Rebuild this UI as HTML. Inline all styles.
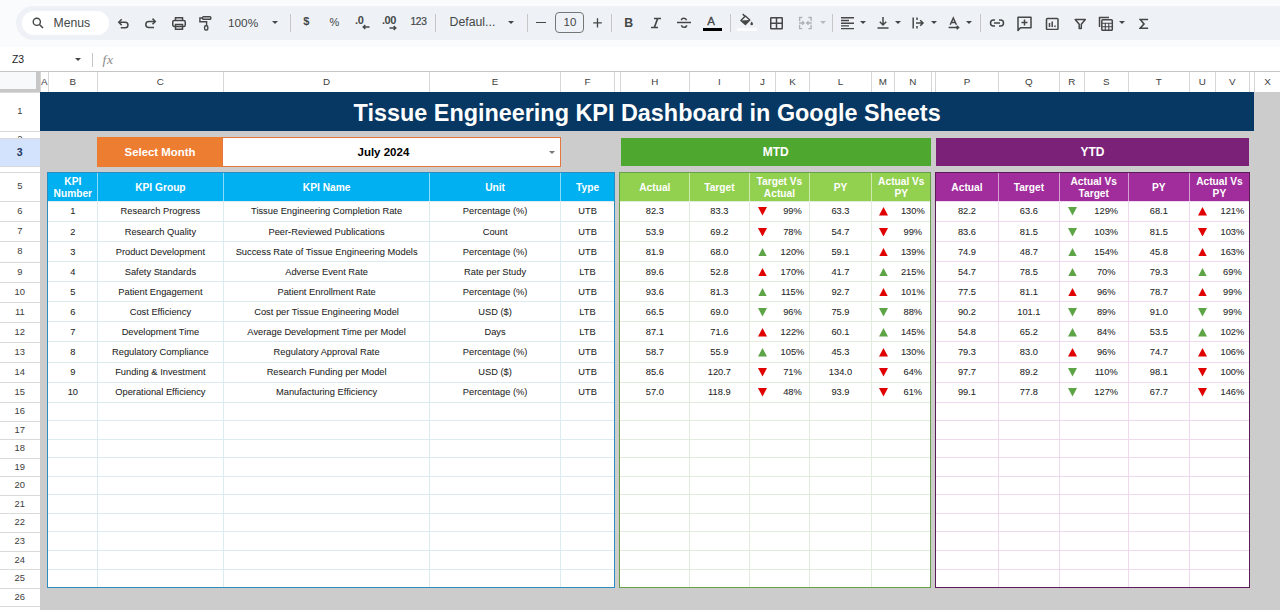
<!DOCTYPE html>
<html><head><meta charset="utf-8">
<style>
html,body{margin:0;padding:0;}
body{width:1280px;height:610px;overflow:hidden;position:relative;background:#f9fbfd;font-family:"Liberation Sans",sans-serif;}
.c,.title{position:absolute;}
#sheet>div{position:absolute;}
.tb{position:absolute;left:16px;top:5.5px;width:1300px;height:34.5px;border-radius:17px;background:#eef2f7;}
.pill{position:absolute;left:22px;top:10.5px;width:87px;height:24.5px;border-radius:12.25px;background:#fff;}
.t{position:absolute;color:#444746;white-space:nowrap;}
.ico{position:absolute;}
.sep{position:absolute;width:1px;background:#c7c7c7;top:13.5px;height:18.5px;}
.arr{position:absolute;width:0;height:0;border-left:3.5px solid transparent;border-right:3.5px solid transparent;border-top:3.5px solid #444746;}
.fbar{position:absolute;left:0;top:47px;width:1280px;height:24px;background:#fff;}
.ch{position:absolute;top:71.5px;height:20.5px;box-sizing:border-box;background:#fff;color:#3c3c3c;font-size:9.8px;padding-top:0px;display:flex;align-items:center;justify-content:center;}
.rh{position:absolute;left:0;width:39.5px;box-sizing:border-box;border-top:1px solid #dadada;background:#fff;color:#3c3c3c;font-size:9.4px;text-align:center;overflow:hidden;}
.rh.sel{background:#d3e3fd;color:#1f3763;font-weight:bold;font-size:10.6px;}
.corner{position:absolute;left:0;top:71px;width:40px;height:21px;background:#f8f9fa;border-top:1px solid #c4c7c5;box-sizing:border-box;}
.td{display:inline-block;width:0;height:0;border-left:4.2px solid transparent;border-right:4.2px solid transparent;border-top:8.4px solid #e60000;}
.tu{display:inline-block;width:0;height:0;border-left:4.2px solid transparent;border-right:4.2px solid transparent;border-bottom:8.4px solid #e60000;}
.dd{position:absolute;right:5px;top:12.5px;width:0;height:0;border-left:3.5px solid transparent;border-right:3.5px solid transparent;border-top:3.5px solid #777;}
</style></head><body>
<div class="tb"></div>
<div class="pill"></div>
<svg class="ico" style="left:32px;top:17px" width="12" height="12" viewBox="0 0 12 12"><circle cx="4.8" cy="4.8" r="3.6" fill="none" stroke="#444746" stroke-width="1.4"/><line x1="7.5" y1="7.5" x2="11" y2="11" stroke="#444746" stroke-width="1.5"/></svg>
<div class="t" style="left:53.5px;top:15.8px;font-size:12.2px">Menus</div>
<div class="fbar"></div>
<div class="t" style="left:12.3px;top:52.2px;font-size:11.6px;color:#1f1f1f;transform:scaleX(0.9);transform-origin:0 0">Z3</div>
<div class="arr" style="left:75px;top:57.5px"></div>
<div class="sep" style="left:92px;top:53px;height:14px"></div>
<div class="t" style="left:102.5px;top:51.6px;font-size:13.5px;font-style:italic;color:#8a8a8a;font-family:'Liberation Serif',serif;letter-spacing:0.8px">fx</div>
<svg class="ico" style="left:117px;top:18px" width="13.00" height="12.00" viewBox="0 0 13.00 12.00" fill="none" stroke="#444746" stroke-width="1.5"><path d="M2.4 4.2 H8.2 A2.75 2.75 0 0 1 8.2 9.7 H3.8"/><path d="M4.7 1.3 L1.8 4.2 L4.7 7.1"/></svg>
<svg class="ico" style="left:144px;top:18px" width="13.00" height="12.00" viewBox="0 0 13.00 12.00" fill="none" stroke="#444746" stroke-width="1.5"><path d="M11 3.4 H4.85 A3.05 3.05 0 0 0 4.85 9.5 H10"/><path d="M8.5 0.6 L11.3 3.4 L8.5 6.2"/></svg>
<svg class="ico" style="left:171px;top:16px" width="16.00" height="14.00" viewBox="0 0 16.00 14.00" fill="none" stroke="#444746" stroke-width="1.5"><path d="M4.5 4.5 V1.75 H11.5 V4.5"/><rect x="1.75" y="4.5" width="12.5" height="6" rx="1.5"/><rect x="4.5" y="8.5" width="7" height="4.75"/></svg>
<svg class="ico" style="left:198px;top:15px" width="15.00" height="17.00" viewBox="0 0 15.00 17.00" fill="none" stroke="#444746" stroke-width="1.5"><rect x="4.6" y="1.8" width="8.2" height="2.4" rx="0.8" stroke-width="1.4"/><path d="M4.6 3 H1.9 V6.8 H8.6 V10.6" stroke-width="1.4"/><rect x="6.6" y="10.8" width="3.2" height="4.2" rx="1.2" stroke-width="1.4"/></svg>
<div class="t" style="left:228px;top:16px;font-size:11.8px;">100%</div>
<div class="arr" style="left:271.5px;top:20.5px;border-top-color:#444746"></div>
<div class="sep" style="left:290.1px;top:13.75px;height:18.15px"></div>
<div class="t" style="left:303.3px;top:15.3px;font-size:11px;font-weight:bold">$</div>
<div class="t" style="left:329.5px;top:16px;font-size:11px;">%</div>
<div class="t" style="left:355px;top:13.5px;font-size:11px;font-weight:bold;letter-spacing:-0.3px">.0</div>
<svg class="ico" style="left:362px;top:24px" width="8.00" height="6.00" viewBox="0 0 8.00 6.00" fill="none" stroke="#444746" stroke-width="1.5"><path d="M7.5 3 H1.2 M3.3 1 L1.2 3 L3.3 5" stroke-width="1.4"/></svg>
<div class="t" style="left:382px;top:13.5px;font-size:11px;font-weight:bold;letter-spacing:-0.5px">.00</div>
<svg class="ico" style="left:389px;top:24.5px" width="8.00" height="6.00" viewBox="0 0 8.00 6.00" fill="none" stroke="#444746" stroke-width="1.5"><path d="M0.5 3 H6.8 M4.7 1 L6.8 3 L4.7 5" stroke-width="1.4"/></svg>
<div class="t" style="left:410.6px;top:16.2px;font-size:10.2px;letter-spacing:-0.4px;-webkit-text-stroke:0.2px #444746">123</div>
<div class="sep" style="left:435.1px;top:13.75px;height:18.15px"></div>
<div class="t" style="left:449.5px;top:15px;font-size:12.3px;">Defaul...</div>
<div class="arr" style="left:507.5px;top:20.8px;border-top-color:#444746"></div>
<div class="sep" style="left:527.0px;top:13.75px;height:18.15px"></div>
<div style="position:absolute;left:536px;top:21.8px;width:9.6px;height:1.5px;background:#444746"></div>
<div style="position:absolute;left:555px;top:12.25px;width:29.4px;height:20.25px;box-sizing:border-box;border:1px solid #747775;border-radius:4px"></div>
<div class="t" style="left:563.5px;top:16.2px;font-size:11.5px;">10</div>
<svg class="ico" style="left:591.5px;top:16.5px" width="11.00" height="11.50" viewBox="0 0 11.00 11.50" fill="none" stroke="#444746" stroke-width="1.5"><path d="M5.5 1.2 V10.4 M1.2 5.8 H9.8" stroke-width="1.35"/></svg>
<div class="sep" style="left:610.75px;top:13.75px;height:18.15px"></div>
<div class="t" style="left:624.2px;top:15.6px;font-size:12.3px;font-weight:bold">B</div>
<svg class="ico" style="left:650px;top:16.5px" width="12.00" height="12.00" viewBox="0 0 12.00 12.00" fill="none" stroke="#444746" stroke-width="1.5"><path d="M4 1.5 H11 M1 10.5 H8 M7.7 1.5 L4.3 10.5" stroke-width="1.7"/></svg>
<svg class="ico" style="left:676px;top:16px" width="16.00" height="13.00" viewBox="0 0 16.00 13.00" fill="none" stroke="#444746" stroke-width="1.5"><path d="M1 6.5 H15"/><path d="M10.6 4.3 C10.2 2.8 9 2.2 8 2.2 C6.6 2.2 5.4 2.9 5.4 4.2"/><path d="M5.4 9.2 C5.8 10.7 7 11.3 8 11.3 C9.4 11.3 10.6 10.6 10.6 9.2"/></svg>
<div class="t" style="left:707.2px;top:15.2px;font-size:11.5px;-webkit-text-stroke:0.3px #444746">A</div>
<div style="position:absolute;left:702.75px;top:27.9px;width:19.2px;height:3px;background:#000"></div>
<div class="sep" style="left:730.1px;top:13.75px;height:18.15px"></div>
<svg class="ico" style="left:738px;top:12px" width="18.00" height="15.00" viewBox="0 0 18.00 15.00" fill="none" stroke="#444746" stroke-width="1.5"><path d="M4.8 1.9 L6.8 4.3"/><path d="M2.9 8.4 L7.4 3.9 L11.8 8.1 L7.4 12.6 Z" stroke-width="1.4" stroke-linejoin="round"/><path d="M2.9 8.4 L11.8 8.1 L7.4 12.6 Z" fill="#444746" stroke="none"/><path d="M13.7 9.4 C12.9 10.6 12.4 11.2 12.4 11.9 A1.3 1.3 0 0 0 15 11.9 C15 11.2 14.5 10.6 13.7 9.4 Z" fill="#444746" stroke="none"/></svg>
<div style="position:absolute;left:737px;top:28px;width:20px;height:2.5px;background:#fbfcfd"></div>
<svg class="ico" style="left:769px;top:16px" width="15.00" height="14.00" viewBox="0 0 15.00 14.00" fill="none" stroke="#444746" stroke-width="1.5"><rect x="1.75" y="1.75" width="11.5" height="11" rx="0.5"/><path d="M7.5 1.75 V12.75 M1.75 7.25 H13.25"/></svg>
<svg class="ico" style="left:798px;top:16px" width="15.00" height="14.00" viewBox="0 0 15.00 14.00" fill="none" stroke="#444746" stroke-width="1.5"><path d="M4.3 1.5 H1.6 V5.2 M1.6 8.8 V12.6 H4.3 M10.4 1.5 H13.1 V5.2 M13.1 8.8 V12.6 H10.4 M1 7 H6 M4.2 5.3 L6 7 L4.2 8.7 M13.7 7 H8.7 M10.5 5.3 L8.7 7 L10.5 8.7" stroke="#aeb1b3" stroke-width="1.3"/></svg>
<div class="arr" style="left:820.3px;top:20.8px;border-top-color:#b8b9ba"></div>
<div class="sep" style="left:832.0px;top:13.75px;height:18.15px"></div>
<svg class="ico" style="left:840px;top:16px" width="15.00" height="14.00" viewBox="0 0 15.00 14.00" fill="none" stroke="#444746" stroke-width="1.5"><path d="M1 1.8 H14 M1 4.5 H9 M1 7.2 H14 M1 9.9 H9 M1 12.6 H14" stroke-width="1.4"/></svg>
<div class="arr" style="left:859.8px;top:21px;border-top-color:#444746"></div>
<svg class="ico" style="left:876px;top:15px" width="14.00" height="15.00" viewBox="0 0 14.00 15.00" fill="none" stroke="#444746" stroke-width="1.5"><path d="M7 2 V10 M3.8 6.8 L7 10 L10.2 6.8 M1.5 13 H12.5"/></svg>
<div class="arr" style="left:895.4px;top:21px;border-top-color:#444746"></div>
<svg class="ico" style="left:911px;top:16px" width="14.00" height="14.00" viewBox="0 0 14.00 14.00" fill="none" stroke="#444746" stroke-width="1.5"><path d="M2.2 1.5 V12.5 M6 1.5 V4 M6 10 V12.5 M5 7 H12 M9.2 4.2 L12 7 L9.2 9.8"/></svg>
<div class="arr" style="left:930.8px;top:21px;border-top-color:#444746"></div>
<svg class="ico" style="left:947px;top:15px" width="15.00" height="16.00" viewBox="0 0 15.00 16.00" fill="none" stroke="#444746" stroke-width="1.5"><path d="M3.2 9.8 L6.3 3 L9.4 9.8 M4.2 7.6 H8.4"/><path d="M1.6 12.6 H11.6 M9.7 10.9 L11.6 12.6 L9.7 14.3"/></svg>
<div class="arr" style="left:965.8px;top:21px;border-top-color:#444746"></div>
<div class="sep" style="left:980.0px;top:13.75px;height:18.15px"></div>
<svg class="ico" style="left:989px;top:17px" width="16.00" height="12.00" viewBox="0 0 16.00 12.00" fill="none" stroke="#444746" stroke-width="1.5"><path d="M6 3 H4.5 A3 3 0 0 0 4.5 9 H6 M10 3 H11.5 A3 3 0 0 1 11.5 9 H10 M5 6 H11"/></svg>
<svg class="ico" style="left:1016px;top:15px" width="17.00" height="17.00" viewBox="0 0 17.00 17.00" fill="none" stroke="#444746" stroke-width="1.5"><path d="M2 15.5 V2.2 H15 V12.8 H4.5 Z" stroke-linejoin="round"/><path d="M8.5 4.5 V10.5 M5.5 7.5 H11.5"/></svg>
<svg class="ico" style="left:1045px;top:16.5px" width="15.00" height="13.50" viewBox="0 0 15.00 13.50" fill="none" stroke="#444746" stroke-width="1.5"><rect x="1.5" y="1.5" width="11.5" height="11" rx="1"/><path d="M4.5 10 V6 M7.2 10 V4.5 M10 10 V8.5"/></svg>
<svg class="ico" style="left:1074px;top:17.5px" width="13.00" height="12.50" viewBox="0 0 13.00 12.50" fill="none" stroke="#444746" stroke-width="1.5"><path d="M1.2 1.5 H11.3 L7.3 6.3 V10.5 H5.2 V6.3 Z" stroke-linejoin="round"/></svg>
<svg class="ico" style="left:1098px;top:15.5px" width="16.00" height="15.50" viewBox="0 0 16.00 15.50" fill="none" stroke="#444746" stroke-width="1.5"><path d="M1.5 11 V1.5 H11"/><rect x="3.8" y="3.8" width="10.5" height="10.5" rx="1"/><path d="M3.8 7.3 H14.3 M3.8 10.8 H14.3 M7.3 7.3 V14.3 M10.8 7.3 V14.3" stroke-width="1.1"/></svg>
<div class="arr" style="left:1118.6px;top:21px;border-top-color:#444746"></div>
<svg class="ico" style="left:1139px;top:17.5px" width="10.00" height="12.00" viewBox="0 0 10.00 12.00" fill="none" stroke="#444746" stroke-width="1.5"><path d="M8.3 2.3 V1.5 H1.2 L5 6 L1.2 10.2 H8.3 V9.4" stroke-width="1.6" stroke-linejoin="miter"/></svg>

<div id="sheet">
<div class="" style="left:40.00px;top:92.00px;width:1240.00px;height:518.00px;background:#cccccc"></div>
<div class="c title" style="left:40.00px;top:92.00px;width:1214.30px;height:38.70px;background:#073763;color:#fff;font-weight:bold;font-size:23.4px;padding-top:5.2px;box-sizing:border-box;display:flex;align-items:center;justify-content:center">Tissue Engineering KPI Dashboard in Google Sheets</div>
<div class="c" style="left:96.80px;top:137.20px;width:126.40px;height:29.40px;background:#ed7d31;color:#fff;font-weight:bold;font-size:11.4px;display:flex;align-items:center;justify-content:center">Select Month</div>
<div class="c" style="left:221.80px;top:137.00px;width:339.20px;height:29.90px;background:#fff;border:1.4px solid #e4773f;box-sizing:border-box;color:#000;font-weight:bold;font-size:11.5px;padding-right:16px;display:flex;align-items:center;justify-content:center">July 2024<span class="dd"></span></div>
<div class="c" style="left:620.90px;top:138.00px;width:309.80px;height:27.80px;background:#4ea72e;color:#fff;font-weight:bold;font-size:12px;display:flex;align-items:center;justify-content:center">MTD</div>
<div class="c" style="left:936.00px;top:138.00px;width:312.90px;height:27.60px;background:#7b2177;color:#fff;font-weight:bold;font-size:12px;display:flex;align-items:center;justify-content:center">YTD</div>
<div class="" style="left:48.40px;top:172.20px;width:566.20px;height:415.40px;background:#fff"></div>
<div class="" style="left:48.40px;top:172.20px;width:566.20px;height:28.80px;background:#00b0f0"></div>
<div class="" style="left:48.40px;top:200.70px;width:566.20px;height:1.00px;background:#dcebf2"></div>
<div class="" style="left:48.40px;top:220.80px;width:566.20px;height:1.00px;background:#dcebf2"></div>
<div class="" style="left:48.40px;top:240.90px;width:566.20px;height:1.00px;background:#dcebf2"></div>
<div class="" style="left:48.40px;top:261.00px;width:566.20px;height:1.00px;background:#dcebf2"></div>
<div class="" style="left:48.40px;top:281.10px;width:566.20px;height:1.00px;background:#dcebf2"></div>
<div class="" style="left:48.40px;top:301.20px;width:566.20px;height:1.00px;background:#dcebf2"></div>
<div class="" style="left:48.40px;top:321.30px;width:566.20px;height:1.00px;background:#dcebf2"></div>
<div class="" style="left:48.40px;top:341.40px;width:566.20px;height:1.00px;background:#dcebf2"></div>
<div class="" style="left:48.40px;top:361.50px;width:566.20px;height:1.00px;background:#dcebf2"></div>
<div class="" style="left:48.40px;top:381.60px;width:566.20px;height:1.00px;background:#dcebf2"></div>
<div class="" style="left:48.40px;top:401.70px;width:566.20px;height:1.00px;background:#dcebf2"></div>
<div class="" style="left:48.40px;top:420.24px;width:566.20px;height:1.00px;background:#dcebf2"></div>
<div class="" style="left:48.40px;top:438.78px;width:566.20px;height:1.00px;background:#dcebf2"></div>
<div class="" style="left:48.40px;top:457.32px;width:566.20px;height:1.00px;background:#dcebf2"></div>
<div class="" style="left:48.40px;top:475.86px;width:566.20px;height:1.00px;background:#dcebf2"></div>
<div class="" style="left:48.40px;top:494.40px;width:566.20px;height:1.00px;background:#dcebf2"></div>
<div class="" style="left:48.40px;top:512.94px;width:566.20px;height:1.00px;background:#dcebf2"></div>
<div class="" style="left:48.40px;top:531.48px;width:566.20px;height:1.00px;background:#dcebf2"></div>
<div class="" style="left:48.40px;top:550.02px;width:566.20px;height:1.00px;background:#dcebf2"></div>
<div class="" style="left:48.40px;top:568.56px;width:566.20px;height:1.00px;background:#dcebf2"></div>
<div class="" style="left:96.80px;top:201.00px;width:1.00px;height:386.60px;background:#dcebf2"></div>
<div class="" style="left:96.80px;top:172.20px;width:1.00px;height:28.80px;background:rgba(255,255,255,.55)"></div>
<div class="" style="left:223.00px;top:201.00px;width:1.00px;height:386.60px;background:#dcebf2"></div>
<div class="" style="left:223.00px;top:172.20px;width:1.00px;height:28.80px;background:rgba(255,255,255,.55)"></div>
<div class="" style="left:429.20px;top:201.00px;width:1.00px;height:386.60px;background:#dcebf2"></div>
<div class="" style="left:429.20px;top:172.20px;width:1.00px;height:28.80px;background:rgba(255,255,255,.55)"></div>
<div class="" style="left:560.00px;top:201.00px;width:1.00px;height:386.60px;background:#dcebf2"></div>
<div class="" style="left:560.00px;top:172.20px;width:1.00px;height:28.80px;background:rgba(255,255,255,.55)"></div>
<div class="c" style="left:48.40px;top:172.20px;width:48.90px;height:28.80px;color:#fff;font-weight:bold;font-size:10.2px;line-height:11.8px;padding-top:3px;box-sizing:border-box;display:flex;align-items:center;justify-content:center;text-align:center">KPI<br>Number</div>
<div class="c" style="left:97.30px;top:172.20px;width:126.20px;height:28.80px;color:#fff;font-weight:bold;font-size:10.2px;line-height:11.8px;padding-top:3px;box-sizing:border-box;display:flex;align-items:center;justify-content:center;text-align:center">KPI Group</div>
<div class="c" style="left:223.50px;top:172.20px;width:206.20px;height:28.80px;color:#fff;font-weight:bold;font-size:10.2px;line-height:11.8px;padding-top:3px;box-sizing:border-box;display:flex;align-items:center;justify-content:center;text-align:center">KPI Name</div>
<div class="c" style="left:429.70px;top:172.20px;width:130.80px;height:28.80px;color:#fff;font-weight:bold;font-size:10.2px;line-height:11.8px;padding-top:3px;box-sizing:border-box;display:flex;align-items:center;justify-content:center;text-align:center">Unit</div>
<div class="c" style="left:560.50px;top:172.20px;width:54.10px;height:28.80px;color:#fff;font-weight:bold;font-size:10.2px;line-height:11.8px;padding-top:3px;box-sizing:border-box;display:flex;align-items:center;justify-content:center;text-align:center">Type</div>
<div class="c" style="left:48.40px;top:201.20px;width:48.90px;height:20.10px;color:#222;-webkit-text-stroke:0.05px #222;font-size:9.3px;padding-top:0.5px;box-sizing:border-box;display:flex;align-items:center;justify-content:center">1</div>
<div class="c" style="left:97.30px;top:201.20px;width:126.20px;height:20.10px;color:#222;-webkit-text-stroke:0.05px #222;font-size:9.3px;padding-top:0.5px;box-sizing:border-box;display:flex;align-items:center;justify-content:center">Research Progress</div>
<div class="c" style="left:223.50px;top:201.20px;width:206.20px;height:20.10px;color:#222;-webkit-text-stroke:0.05px #222;font-size:9.3px;padding-top:0.5px;box-sizing:border-box;display:flex;align-items:center;justify-content:center">Tissue Engineering Completion Rate</div>
<div class="c" style="left:429.70px;top:201.20px;width:130.80px;height:20.10px;color:#222;-webkit-text-stroke:0.05px #222;font-size:9.3px;padding-top:0.5px;box-sizing:border-box;display:flex;align-items:center;justify-content:center">Percentage (%)</div>
<div class="c" style="left:560.50px;top:201.20px;width:54.10px;height:20.10px;color:#222;-webkit-text-stroke:0.05px #222;font-size:9.3px;padding-top:0.5px;box-sizing:border-box;display:flex;align-items:center;justify-content:center">UTB</div>
<div class="c" style="left:48.40px;top:221.30px;width:48.90px;height:20.10px;color:#222;-webkit-text-stroke:0.05px #222;font-size:9.3px;padding-top:0.5px;box-sizing:border-box;display:flex;align-items:center;justify-content:center">2</div>
<div class="c" style="left:97.30px;top:221.30px;width:126.20px;height:20.10px;color:#222;-webkit-text-stroke:0.05px #222;font-size:9.3px;padding-top:0.5px;box-sizing:border-box;display:flex;align-items:center;justify-content:center">Research Quality</div>
<div class="c" style="left:223.50px;top:221.30px;width:206.20px;height:20.10px;color:#222;-webkit-text-stroke:0.05px #222;font-size:9.3px;padding-top:0.5px;box-sizing:border-box;display:flex;align-items:center;justify-content:center">Peer-Reviewed Publications</div>
<div class="c" style="left:429.70px;top:221.30px;width:130.80px;height:20.10px;color:#222;-webkit-text-stroke:0.05px #222;font-size:9.3px;padding-top:0.5px;box-sizing:border-box;display:flex;align-items:center;justify-content:center">Count</div>
<div class="c" style="left:560.50px;top:221.30px;width:54.10px;height:20.10px;color:#222;-webkit-text-stroke:0.05px #222;font-size:9.3px;padding-top:0.5px;box-sizing:border-box;display:flex;align-items:center;justify-content:center">UTB</div>
<div class="c" style="left:48.40px;top:241.40px;width:48.90px;height:20.10px;color:#222;-webkit-text-stroke:0.05px #222;font-size:9.3px;padding-top:0.5px;box-sizing:border-box;display:flex;align-items:center;justify-content:center">3</div>
<div class="c" style="left:97.30px;top:241.40px;width:126.20px;height:20.10px;color:#222;-webkit-text-stroke:0.05px #222;font-size:9.3px;padding-top:0.5px;box-sizing:border-box;display:flex;align-items:center;justify-content:center">Product Development</div>
<div class="c" style="left:223.50px;top:241.40px;width:206.20px;height:20.10px;color:#222;-webkit-text-stroke:0.05px #222;font-size:9.3px;padding-top:0.5px;box-sizing:border-box;display:flex;align-items:center;justify-content:center">Success Rate of Tissue Engineering Models</div>
<div class="c" style="left:429.70px;top:241.40px;width:130.80px;height:20.10px;color:#222;-webkit-text-stroke:0.05px #222;font-size:9.3px;padding-top:0.5px;box-sizing:border-box;display:flex;align-items:center;justify-content:center">Percentage (%)</div>
<div class="c" style="left:560.50px;top:241.40px;width:54.10px;height:20.10px;color:#222;-webkit-text-stroke:0.05px #222;font-size:9.3px;padding-top:0.5px;box-sizing:border-box;display:flex;align-items:center;justify-content:center">UTB</div>
<div class="c" style="left:48.40px;top:261.50px;width:48.90px;height:20.10px;color:#222;-webkit-text-stroke:0.05px #222;font-size:9.3px;padding-top:0.5px;box-sizing:border-box;display:flex;align-items:center;justify-content:center">4</div>
<div class="c" style="left:97.30px;top:261.50px;width:126.20px;height:20.10px;color:#222;-webkit-text-stroke:0.05px #222;font-size:9.3px;padding-top:0.5px;box-sizing:border-box;display:flex;align-items:center;justify-content:center">Safety Standards</div>
<div class="c" style="left:223.50px;top:261.50px;width:206.20px;height:20.10px;color:#222;-webkit-text-stroke:0.05px #222;font-size:9.3px;padding-top:0.5px;box-sizing:border-box;display:flex;align-items:center;justify-content:center">Adverse Event Rate</div>
<div class="c" style="left:429.70px;top:261.50px;width:130.80px;height:20.10px;color:#222;-webkit-text-stroke:0.05px #222;font-size:9.3px;padding-top:0.5px;box-sizing:border-box;display:flex;align-items:center;justify-content:center">Rate per Study</div>
<div class="c" style="left:560.50px;top:261.50px;width:54.10px;height:20.10px;color:#222;-webkit-text-stroke:0.05px #222;font-size:9.3px;padding-top:0.5px;box-sizing:border-box;display:flex;align-items:center;justify-content:center">LTB</div>
<div class="c" style="left:48.40px;top:281.60px;width:48.90px;height:20.10px;color:#222;-webkit-text-stroke:0.05px #222;font-size:9.3px;padding-top:0.5px;box-sizing:border-box;display:flex;align-items:center;justify-content:center">5</div>
<div class="c" style="left:97.30px;top:281.60px;width:126.20px;height:20.10px;color:#222;-webkit-text-stroke:0.05px #222;font-size:9.3px;padding-top:0.5px;box-sizing:border-box;display:flex;align-items:center;justify-content:center">Patient Engagement</div>
<div class="c" style="left:223.50px;top:281.60px;width:206.20px;height:20.10px;color:#222;-webkit-text-stroke:0.05px #222;font-size:9.3px;padding-top:0.5px;box-sizing:border-box;display:flex;align-items:center;justify-content:center">Patient Enrollment Rate</div>
<div class="c" style="left:429.70px;top:281.60px;width:130.80px;height:20.10px;color:#222;-webkit-text-stroke:0.05px #222;font-size:9.3px;padding-top:0.5px;box-sizing:border-box;display:flex;align-items:center;justify-content:center">Percentage (%)</div>
<div class="c" style="left:560.50px;top:281.60px;width:54.10px;height:20.10px;color:#222;-webkit-text-stroke:0.05px #222;font-size:9.3px;padding-top:0.5px;box-sizing:border-box;display:flex;align-items:center;justify-content:center">UTB</div>
<div class="c" style="left:48.40px;top:301.70px;width:48.90px;height:20.10px;color:#222;-webkit-text-stroke:0.05px #222;font-size:9.3px;padding-top:0.5px;box-sizing:border-box;display:flex;align-items:center;justify-content:center">6</div>
<div class="c" style="left:97.30px;top:301.70px;width:126.20px;height:20.10px;color:#222;-webkit-text-stroke:0.05px #222;font-size:9.3px;padding-top:0.5px;box-sizing:border-box;display:flex;align-items:center;justify-content:center">Cost Efficiency</div>
<div class="c" style="left:223.50px;top:301.70px;width:206.20px;height:20.10px;color:#222;-webkit-text-stroke:0.05px #222;font-size:9.3px;padding-top:0.5px;box-sizing:border-box;display:flex;align-items:center;justify-content:center">Cost per Tissue Engineering Model</div>
<div class="c" style="left:429.70px;top:301.70px;width:130.80px;height:20.10px;color:#222;-webkit-text-stroke:0.05px #222;font-size:9.3px;padding-top:0.5px;box-sizing:border-box;display:flex;align-items:center;justify-content:center">USD ($)</div>
<div class="c" style="left:560.50px;top:301.70px;width:54.10px;height:20.10px;color:#222;-webkit-text-stroke:0.05px #222;font-size:9.3px;padding-top:0.5px;box-sizing:border-box;display:flex;align-items:center;justify-content:center">LTB</div>
<div class="c" style="left:48.40px;top:321.80px;width:48.90px;height:20.10px;color:#222;-webkit-text-stroke:0.05px #222;font-size:9.3px;padding-top:0.5px;box-sizing:border-box;display:flex;align-items:center;justify-content:center">7</div>
<div class="c" style="left:97.30px;top:321.80px;width:126.20px;height:20.10px;color:#222;-webkit-text-stroke:0.05px #222;font-size:9.3px;padding-top:0.5px;box-sizing:border-box;display:flex;align-items:center;justify-content:center">Development Time</div>
<div class="c" style="left:223.50px;top:321.80px;width:206.20px;height:20.10px;color:#222;-webkit-text-stroke:0.05px #222;font-size:9.3px;padding-top:0.5px;box-sizing:border-box;display:flex;align-items:center;justify-content:center">Average Development Time per Model</div>
<div class="c" style="left:429.70px;top:321.80px;width:130.80px;height:20.10px;color:#222;-webkit-text-stroke:0.05px #222;font-size:9.3px;padding-top:0.5px;box-sizing:border-box;display:flex;align-items:center;justify-content:center">Days</div>
<div class="c" style="left:560.50px;top:321.80px;width:54.10px;height:20.10px;color:#222;-webkit-text-stroke:0.05px #222;font-size:9.3px;padding-top:0.5px;box-sizing:border-box;display:flex;align-items:center;justify-content:center">LTB</div>
<div class="c" style="left:48.40px;top:341.90px;width:48.90px;height:20.10px;color:#222;-webkit-text-stroke:0.05px #222;font-size:9.3px;padding-top:0.5px;box-sizing:border-box;display:flex;align-items:center;justify-content:center">8</div>
<div class="c" style="left:97.30px;top:341.90px;width:126.20px;height:20.10px;color:#222;-webkit-text-stroke:0.05px #222;font-size:9.3px;padding-top:0.5px;box-sizing:border-box;display:flex;align-items:center;justify-content:center">Regulatory Compliance</div>
<div class="c" style="left:223.50px;top:341.90px;width:206.20px;height:20.10px;color:#222;-webkit-text-stroke:0.05px #222;font-size:9.3px;padding-top:0.5px;box-sizing:border-box;display:flex;align-items:center;justify-content:center">Regulatory Approval Rate</div>
<div class="c" style="left:429.70px;top:341.90px;width:130.80px;height:20.10px;color:#222;-webkit-text-stroke:0.05px #222;font-size:9.3px;padding-top:0.5px;box-sizing:border-box;display:flex;align-items:center;justify-content:center">Percentage (%)</div>
<div class="c" style="left:560.50px;top:341.90px;width:54.10px;height:20.10px;color:#222;-webkit-text-stroke:0.05px #222;font-size:9.3px;padding-top:0.5px;box-sizing:border-box;display:flex;align-items:center;justify-content:center">UTB</div>
<div class="c" style="left:48.40px;top:362.00px;width:48.90px;height:20.10px;color:#222;-webkit-text-stroke:0.05px #222;font-size:9.3px;padding-top:0.5px;box-sizing:border-box;display:flex;align-items:center;justify-content:center">9</div>
<div class="c" style="left:97.30px;top:362.00px;width:126.20px;height:20.10px;color:#222;-webkit-text-stroke:0.05px #222;font-size:9.3px;padding-top:0.5px;box-sizing:border-box;display:flex;align-items:center;justify-content:center">Funding & Investment</div>
<div class="c" style="left:223.50px;top:362.00px;width:206.20px;height:20.10px;color:#222;-webkit-text-stroke:0.05px #222;font-size:9.3px;padding-top:0.5px;box-sizing:border-box;display:flex;align-items:center;justify-content:center">Research Funding per Model</div>
<div class="c" style="left:429.70px;top:362.00px;width:130.80px;height:20.10px;color:#222;-webkit-text-stroke:0.05px #222;font-size:9.3px;padding-top:0.5px;box-sizing:border-box;display:flex;align-items:center;justify-content:center">USD ($)</div>
<div class="c" style="left:560.50px;top:362.00px;width:54.10px;height:20.10px;color:#222;-webkit-text-stroke:0.05px #222;font-size:9.3px;padding-top:0.5px;box-sizing:border-box;display:flex;align-items:center;justify-content:center">UTB</div>
<div class="c" style="left:48.40px;top:382.10px;width:48.90px;height:20.10px;color:#222;-webkit-text-stroke:0.05px #222;font-size:9.3px;padding-top:0.5px;box-sizing:border-box;display:flex;align-items:center;justify-content:center">10</div>
<div class="c" style="left:97.30px;top:382.10px;width:126.20px;height:20.10px;color:#222;-webkit-text-stroke:0.05px #222;font-size:9.3px;padding-top:0.5px;box-sizing:border-box;display:flex;align-items:center;justify-content:center">Operational Efficiency</div>
<div class="c" style="left:223.50px;top:382.10px;width:206.20px;height:20.10px;color:#222;-webkit-text-stroke:0.05px #222;font-size:9.3px;padding-top:0.5px;box-sizing:border-box;display:flex;align-items:center;justify-content:center">Manufacturing Efficiency</div>
<div class="c" style="left:429.70px;top:382.10px;width:130.80px;height:20.10px;color:#222;-webkit-text-stroke:0.05px #222;font-size:9.3px;padding-top:0.5px;box-sizing:border-box;display:flex;align-items:center;justify-content:center">Percentage (%)</div>
<div class="c" style="left:560.50px;top:382.10px;width:54.10px;height:20.10px;color:#222;-webkit-text-stroke:0.05px #222;font-size:9.3px;padding-top:0.5px;box-sizing:border-box;display:flex;align-items:center;justify-content:center">UTB</div>
<div class="" style="left:47.10px;top:171.80px;width:568.20px;height:416.10px;border:1.9px solid #2a8cbf;box-sizing:border-box"></div>
<div class="" style="left:620.30px;top:172.20px;width:311.00px;height:415.40px;background:#fff"></div>
<div class="" style="left:620.30px;top:172.20px;width:311.00px;height:28.80px;background:#92d050"></div>
<div class="" style="left:620.30px;top:200.70px;width:311.00px;height:1.00px;background:#e2ecdc"></div>
<div class="" style="left:620.30px;top:220.80px;width:311.00px;height:1.00px;background:#e2ecdc"></div>
<div class="" style="left:620.30px;top:240.90px;width:311.00px;height:1.00px;background:#e2ecdc"></div>
<div class="" style="left:620.30px;top:261.00px;width:311.00px;height:1.00px;background:#e2ecdc"></div>
<div class="" style="left:620.30px;top:281.10px;width:311.00px;height:1.00px;background:#e2ecdc"></div>
<div class="" style="left:620.30px;top:301.20px;width:311.00px;height:1.00px;background:#e2ecdc"></div>
<div class="" style="left:620.30px;top:321.30px;width:311.00px;height:1.00px;background:#e2ecdc"></div>
<div class="" style="left:620.30px;top:341.40px;width:311.00px;height:1.00px;background:#e2ecdc"></div>
<div class="" style="left:620.30px;top:361.50px;width:311.00px;height:1.00px;background:#e2ecdc"></div>
<div class="" style="left:620.30px;top:381.60px;width:311.00px;height:1.00px;background:#e2ecdc"></div>
<div class="" style="left:620.30px;top:401.70px;width:311.00px;height:1.00px;background:#e2ecdc"></div>
<div class="" style="left:620.30px;top:420.24px;width:311.00px;height:1.00px;background:#e2ecdc"></div>
<div class="" style="left:620.30px;top:438.78px;width:311.00px;height:1.00px;background:#e2ecdc"></div>
<div class="" style="left:620.30px;top:457.32px;width:311.00px;height:1.00px;background:#e2ecdc"></div>
<div class="" style="left:620.30px;top:475.86px;width:311.00px;height:1.00px;background:#e2ecdc"></div>
<div class="" style="left:620.30px;top:494.40px;width:311.00px;height:1.00px;background:#e2ecdc"></div>
<div class="" style="left:620.30px;top:512.94px;width:311.00px;height:1.00px;background:#e2ecdc"></div>
<div class="" style="left:620.30px;top:531.48px;width:311.00px;height:1.00px;background:#e2ecdc"></div>
<div class="" style="left:620.30px;top:550.02px;width:311.00px;height:1.00px;background:#e2ecdc"></div>
<div class="" style="left:620.30px;top:568.56px;width:311.00px;height:1.00px;background:#e2ecdc"></div>
<div class="" style="left:688.90px;top:201.00px;width:1.00px;height:386.60px;background:#e2ecdc"></div>
<div class="" style="left:688.90px;top:172.20px;width:1.00px;height:28.80px;background:rgba(255,255,255,.55)"></div>
<div class="" style="left:748.90px;top:201.00px;width:1.00px;height:386.60px;background:#e2ecdc"></div>
<div class="" style="left:748.90px;top:172.20px;width:1.00px;height:28.80px;background:rgba(255,255,255,.55)"></div>
<div class="" style="left:809.00px;top:201.00px;width:1.00px;height:386.60px;background:#e2ecdc"></div>
<div class="" style="left:809.00px;top:172.20px;width:1.00px;height:28.80px;background:rgba(255,255,255,.55)"></div>
<div class="" style="left:870.90px;top:201.00px;width:1.00px;height:386.60px;background:#e2ecdc"></div>
<div class="" style="left:870.90px;top:172.20px;width:1.00px;height:28.80px;background:rgba(255,255,255,.55)"></div>
<div class="c" style="left:620.30px;top:172.20px;width:69.10px;height:28.80px;color:#fff;font-weight:bold;font-size:10.2px;line-height:11.8px;padding-top:3px;box-sizing:border-box;display:flex;align-items:center;justify-content:center;text-align:center">Actual</div>
<div class="c" style="left:689.40px;top:172.20px;width:60.00px;height:28.80px;color:#fff;font-weight:bold;font-size:10.2px;line-height:11.8px;padding-top:3px;box-sizing:border-box;display:flex;align-items:center;justify-content:center;text-align:center">Target</div>
<div class="c" style="left:749.40px;top:172.20px;width:60.10px;height:28.80px;color:#fff;font-weight:bold;font-size:10.2px;line-height:11.8px;padding-top:3px;box-sizing:border-box;display:flex;align-items:center;justify-content:center;text-align:center">Target Vs<br>Actual</div>
<div class="c" style="left:809.50px;top:172.20px;width:61.90px;height:28.80px;color:#fff;font-weight:bold;font-size:10.2px;line-height:11.8px;padding-top:3px;box-sizing:border-box;display:flex;align-items:center;justify-content:center;text-align:center">PY</div>
<div class="c" style="left:871.40px;top:172.20px;width:59.90px;height:28.80px;color:#fff;font-weight:bold;font-size:10.2px;line-height:11.8px;padding-top:3px;box-sizing:border-box;display:flex;align-items:center;justify-content:center;text-align:center">Actual Vs<br>PY</div>
<div class="c" style="left:620.30px;top:201.20px;width:69.10px;height:20.10px;color:#222;-webkit-text-stroke:0.05px #222;font-size:9.3px;padding-top:0.5px;box-sizing:border-box;display:flex;align-items:center;justify-content:center">82.3</div>
<div class="c" style="left:689.40px;top:201.20px;width:60.00px;height:20.10px;color:#222;-webkit-text-stroke:0.05px #222;font-size:9.3px;padding-top:0.5px;box-sizing:border-box;display:flex;align-items:center;justify-content:center">83.3</div>
<div class="c" style="left:749.40px;top:201.20px;width:26.10px;height:20.10px;display:flex;align-items:center;justify-content:center"><svg width="9" height="8.6" viewBox="0 0 9 8.6" style="margin-left:1px;margin-top:1px"><polygon points="0,0 9,0 4.5,8.6" fill="#e00000"/></svg></div>
<div class="c" style="left:775.50px;top:201.20px;width:34.00px;height:20.10px;color:#222;-webkit-text-stroke:0.05px #222;font-size:9.3px;padding-top:0.5px;box-sizing:border-box;display:flex;align-items:center;justify-content:center">99%</div>
<div class="c" style="left:809.50px;top:201.20px;width:61.90px;height:20.10px;color:#222;-webkit-text-stroke:0.05px #222;font-size:9.3px;padding-top:0.5px;box-sizing:border-box;display:flex;align-items:center;justify-content:center">63.3</div>
<div class="c" style="left:871.40px;top:201.20px;width:23.00px;height:20.10px;display:flex;align-items:center;justify-content:center"><svg width="9" height="8.6" viewBox="0 0 9 8.6" style="margin-left:1px;margin-top:1px"><polygon points="0,8.6 9,8.6 4.5,0" fill="#e00000"/></svg></div>
<div class="c" style="left:894.40px;top:201.20px;width:36.90px;height:20.10px;color:#222;-webkit-text-stroke:0.05px #222;font-size:9.3px;padding-top:0.5px;box-sizing:border-box;display:flex;align-items:center;justify-content:center">130%</div>
<div class="c" style="left:620.30px;top:221.30px;width:69.10px;height:20.10px;color:#222;-webkit-text-stroke:0.05px #222;font-size:9.3px;padding-top:0.5px;box-sizing:border-box;display:flex;align-items:center;justify-content:center">53.9</div>
<div class="c" style="left:689.40px;top:221.30px;width:60.00px;height:20.10px;color:#222;-webkit-text-stroke:0.05px #222;font-size:9.3px;padding-top:0.5px;box-sizing:border-box;display:flex;align-items:center;justify-content:center">69.2</div>
<div class="c" style="left:749.40px;top:221.30px;width:26.10px;height:20.10px;display:flex;align-items:center;justify-content:center"><svg width="9" height="8.6" viewBox="0 0 9 8.6" style="margin-left:1px;margin-top:1px"><polygon points="0,0 9,0 4.5,8.6" fill="#e00000"/></svg></div>
<div class="c" style="left:775.50px;top:221.30px;width:34.00px;height:20.10px;color:#222;-webkit-text-stroke:0.05px #222;font-size:9.3px;padding-top:0.5px;box-sizing:border-box;display:flex;align-items:center;justify-content:center">78%</div>
<div class="c" style="left:809.50px;top:221.30px;width:61.90px;height:20.10px;color:#222;-webkit-text-stroke:0.05px #222;font-size:9.3px;padding-top:0.5px;box-sizing:border-box;display:flex;align-items:center;justify-content:center">54.7</div>
<div class="c" style="left:871.40px;top:221.30px;width:23.00px;height:20.10px;display:flex;align-items:center;justify-content:center"><svg width="9" height="8.6" viewBox="0 0 9 8.6" style="margin-left:1px;margin-top:1px"><polygon points="0,0 9,0 4.5,8.6" fill="#e00000"/></svg></div>
<div class="c" style="left:894.40px;top:221.30px;width:36.90px;height:20.10px;color:#222;-webkit-text-stroke:0.05px #222;font-size:9.3px;padding-top:0.5px;box-sizing:border-box;display:flex;align-items:center;justify-content:center">99%</div>
<div class="c" style="left:620.30px;top:241.40px;width:69.10px;height:20.10px;color:#222;-webkit-text-stroke:0.05px #222;font-size:9.3px;padding-top:0.5px;box-sizing:border-box;display:flex;align-items:center;justify-content:center">81.9</div>
<div class="c" style="left:689.40px;top:241.40px;width:60.00px;height:20.10px;color:#222;-webkit-text-stroke:0.05px #222;font-size:9.3px;padding-top:0.5px;box-sizing:border-box;display:flex;align-items:center;justify-content:center">68.0</div>
<div class="c" style="left:749.40px;top:241.40px;width:26.10px;height:20.10px;display:flex;align-items:center;justify-content:center"><svg width="9" height="8.6" viewBox="0 0 9 8.6" style="margin-left:1px;margin-top:1px"><polygon points="0,8.6 9,8.6 4.5,0" fill="#5ca445"/></svg></div>
<div class="c" style="left:775.50px;top:241.40px;width:34.00px;height:20.10px;color:#222;-webkit-text-stroke:0.05px #222;font-size:9.3px;padding-top:0.5px;box-sizing:border-box;display:flex;align-items:center;justify-content:center">120%</div>
<div class="c" style="left:809.50px;top:241.40px;width:61.90px;height:20.10px;color:#222;-webkit-text-stroke:0.05px #222;font-size:9.3px;padding-top:0.5px;box-sizing:border-box;display:flex;align-items:center;justify-content:center">59.1</div>
<div class="c" style="left:871.40px;top:241.40px;width:23.00px;height:20.10px;display:flex;align-items:center;justify-content:center"><svg width="9" height="8.6" viewBox="0 0 9 8.6" style="margin-left:1px;margin-top:1px"><polygon points="0,8.6 9,8.6 4.5,0" fill="#e00000"/></svg></div>
<div class="c" style="left:894.40px;top:241.40px;width:36.90px;height:20.10px;color:#222;-webkit-text-stroke:0.05px #222;font-size:9.3px;padding-top:0.5px;box-sizing:border-box;display:flex;align-items:center;justify-content:center">139%</div>
<div class="c" style="left:620.30px;top:261.50px;width:69.10px;height:20.10px;color:#222;-webkit-text-stroke:0.05px #222;font-size:9.3px;padding-top:0.5px;box-sizing:border-box;display:flex;align-items:center;justify-content:center">89.6</div>
<div class="c" style="left:689.40px;top:261.50px;width:60.00px;height:20.10px;color:#222;-webkit-text-stroke:0.05px #222;font-size:9.3px;padding-top:0.5px;box-sizing:border-box;display:flex;align-items:center;justify-content:center">52.8</div>
<div class="c" style="left:749.40px;top:261.50px;width:26.10px;height:20.10px;display:flex;align-items:center;justify-content:center"><svg width="9" height="8.6" viewBox="0 0 9 8.6" style="margin-left:1px;margin-top:1px"><polygon points="0,8.6 9,8.6 4.5,0" fill="#e00000"/></svg></div>
<div class="c" style="left:775.50px;top:261.50px;width:34.00px;height:20.10px;color:#222;-webkit-text-stroke:0.05px #222;font-size:9.3px;padding-top:0.5px;box-sizing:border-box;display:flex;align-items:center;justify-content:center">170%</div>
<div class="c" style="left:809.50px;top:261.50px;width:61.90px;height:20.10px;color:#222;-webkit-text-stroke:0.05px #222;font-size:9.3px;padding-top:0.5px;box-sizing:border-box;display:flex;align-items:center;justify-content:center">41.7</div>
<div class="c" style="left:871.40px;top:261.50px;width:23.00px;height:20.10px;display:flex;align-items:center;justify-content:center"><svg width="9" height="8.6" viewBox="0 0 9 8.6" style="margin-left:1px;margin-top:1px"><polygon points="0,8.6 9,8.6 4.5,0" fill="#5ca445"/></svg></div>
<div class="c" style="left:894.40px;top:261.50px;width:36.90px;height:20.10px;color:#222;-webkit-text-stroke:0.05px #222;font-size:9.3px;padding-top:0.5px;box-sizing:border-box;display:flex;align-items:center;justify-content:center">215%</div>
<div class="c" style="left:620.30px;top:281.60px;width:69.10px;height:20.10px;color:#222;-webkit-text-stroke:0.05px #222;font-size:9.3px;padding-top:0.5px;box-sizing:border-box;display:flex;align-items:center;justify-content:center">93.6</div>
<div class="c" style="left:689.40px;top:281.60px;width:60.00px;height:20.10px;color:#222;-webkit-text-stroke:0.05px #222;font-size:9.3px;padding-top:0.5px;box-sizing:border-box;display:flex;align-items:center;justify-content:center">81.3</div>
<div class="c" style="left:749.40px;top:281.60px;width:26.10px;height:20.10px;display:flex;align-items:center;justify-content:center"><svg width="9" height="8.6" viewBox="0 0 9 8.6" style="margin-left:1px;margin-top:1px"><polygon points="0,8.6 9,8.6 4.5,0" fill="#5ca445"/></svg></div>
<div class="c" style="left:775.50px;top:281.60px;width:34.00px;height:20.10px;color:#222;-webkit-text-stroke:0.05px #222;font-size:9.3px;padding-top:0.5px;box-sizing:border-box;display:flex;align-items:center;justify-content:center">115%</div>
<div class="c" style="left:809.50px;top:281.60px;width:61.90px;height:20.10px;color:#222;-webkit-text-stroke:0.05px #222;font-size:9.3px;padding-top:0.5px;box-sizing:border-box;display:flex;align-items:center;justify-content:center">92.7</div>
<div class="c" style="left:871.40px;top:281.60px;width:23.00px;height:20.10px;display:flex;align-items:center;justify-content:center"><svg width="9" height="8.6" viewBox="0 0 9 8.6" style="margin-left:1px;margin-top:1px"><polygon points="0,8.6 9,8.6 4.5,0" fill="#e00000"/></svg></div>
<div class="c" style="left:894.40px;top:281.60px;width:36.90px;height:20.10px;color:#222;-webkit-text-stroke:0.05px #222;font-size:9.3px;padding-top:0.5px;box-sizing:border-box;display:flex;align-items:center;justify-content:center">101%</div>
<div class="c" style="left:620.30px;top:301.70px;width:69.10px;height:20.10px;color:#222;-webkit-text-stroke:0.05px #222;font-size:9.3px;padding-top:0.5px;box-sizing:border-box;display:flex;align-items:center;justify-content:center">66.5</div>
<div class="c" style="left:689.40px;top:301.70px;width:60.00px;height:20.10px;color:#222;-webkit-text-stroke:0.05px #222;font-size:9.3px;padding-top:0.5px;box-sizing:border-box;display:flex;align-items:center;justify-content:center">69.0</div>
<div class="c" style="left:749.40px;top:301.70px;width:26.10px;height:20.10px;display:flex;align-items:center;justify-content:center"><svg width="9" height="8.6" viewBox="0 0 9 8.6" style="margin-left:1px;margin-top:1px"><polygon points="0,0 9,0 4.5,8.6" fill="#5ca445"/></svg></div>
<div class="c" style="left:775.50px;top:301.70px;width:34.00px;height:20.10px;color:#222;-webkit-text-stroke:0.05px #222;font-size:9.3px;padding-top:0.5px;box-sizing:border-box;display:flex;align-items:center;justify-content:center">96%</div>
<div class="c" style="left:809.50px;top:301.70px;width:61.90px;height:20.10px;color:#222;-webkit-text-stroke:0.05px #222;font-size:9.3px;padding-top:0.5px;box-sizing:border-box;display:flex;align-items:center;justify-content:center">75.9</div>
<div class="c" style="left:871.40px;top:301.70px;width:23.00px;height:20.10px;display:flex;align-items:center;justify-content:center"><svg width="9" height="8.6" viewBox="0 0 9 8.6" style="margin-left:1px;margin-top:1px"><polygon points="0,0 9,0 4.5,8.6" fill="#5ca445"/></svg></div>
<div class="c" style="left:894.40px;top:301.70px;width:36.90px;height:20.10px;color:#222;-webkit-text-stroke:0.05px #222;font-size:9.3px;padding-top:0.5px;box-sizing:border-box;display:flex;align-items:center;justify-content:center">88%</div>
<div class="c" style="left:620.30px;top:321.80px;width:69.10px;height:20.10px;color:#222;-webkit-text-stroke:0.05px #222;font-size:9.3px;padding-top:0.5px;box-sizing:border-box;display:flex;align-items:center;justify-content:center">87.1</div>
<div class="c" style="left:689.40px;top:321.80px;width:60.00px;height:20.10px;color:#222;-webkit-text-stroke:0.05px #222;font-size:9.3px;padding-top:0.5px;box-sizing:border-box;display:flex;align-items:center;justify-content:center">71.6</div>
<div class="c" style="left:749.40px;top:321.80px;width:26.10px;height:20.10px;display:flex;align-items:center;justify-content:center"><svg width="9" height="8.6" viewBox="0 0 9 8.6" style="margin-left:1px;margin-top:1px"><polygon points="0,8.6 9,8.6 4.5,0" fill="#e00000"/></svg></div>
<div class="c" style="left:775.50px;top:321.80px;width:34.00px;height:20.10px;color:#222;-webkit-text-stroke:0.05px #222;font-size:9.3px;padding-top:0.5px;box-sizing:border-box;display:flex;align-items:center;justify-content:center">122%</div>
<div class="c" style="left:809.50px;top:321.80px;width:61.90px;height:20.10px;color:#222;-webkit-text-stroke:0.05px #222;font-size:9.3px;padding-top:0.5px;box-sizing:border-box;display:flex;align-items:center;justify-content:center">60.1</div>
<div class="c" style="left:871.40px;top:321.80px;width:23.00px;height:20.10px;display:flex;align-items:center;justify-content:center"><svg width="9" height="8.6" viewBox="0 0 9 8.6" style="margin-left:1px;margin-top:1px"><polygon points="0,8.6 9,8.6 4.5,0" fill="#5ca445"/></svg></div>
<div class="c" style="left:894.40px;top:321.80px;width:36.90px;height:20.10px;color:#222;-webkit-text-stroke:0.05px #222;font-size:9.3px;padding-top:0.5px;box-sizing:border-box;display:flex;align-items:center;justify-content:center">145%</div>
<div class="c" style="left:620.30px;top:341.90px;width:69.10px;height:20.10px;color:#222;-webkit-text-stroke:0.05px #222;font-size:9.3px;padding-top:0.5px;box-sizing:border-box;display:flex;align-items:center;justify-content:center">58.7</div>
<div class="c" style="left:689.40px;top:341.90px;width:60.00px;height:20.10px;color:#222;-webkit-text-stroke:0.05px #222;font-size:9.3px;padding-top:0.5px;box-sizing:border-box;display:flex;align-items:center;justify-content:center">55.9</div>
<div class="c" style="left:749.40px;top:341.90px;width:26.10px;height:20.10px;display:flex;align-items:center;justify-content:center"><svg width="9" height="8.6" viewBox="0 0 9 8.6" style="margin-left:1px;margin-top:1px"><polygon points="0,8.6 9,8.6 4.5,0" fill="#5ca445"/></svg></div>
<div class="c" style="left:775.50px;top:341.90px;width:34.00px;height:20.10px;color:#222;-webkit-text-stroke:0.05px #222;font-size:9.3px;padding-top:0.5px;box-sizing:border-box;display:flex;align-items:center;justify-content:center">105%</div>
<div class="c" style="left:809.50px;top:341.90px;width:61.90px;height:20.10px;color:#222;-webkit-text-stroke:0.05px #222;font-size:9.3px;padding-top:0.5px;box-sizing:border-box;display:flex;align-items:center;justify-content:center">45.3</div>
<div class="c" style="left:871.40px;top:341.90px;width:23.00px;height:20.10px;display:flex;align-items:center;justify-content:center"><svg width="9" height="8.6" viewBox="0 0 9 8.6" style="margin-left:1px;margin-top:1px"><polygon points="0,8.6 9,8.6 4.5,0" fill="#e00000"/></svg></div>
<div class="c" style="left:894.40px;top:341.90px;width:36.90px;height:20.10px;color:#222;-webkit-text-stroke:0.05px #222;font-size:9.3px;padding-top:0.5px;box-sizing:border-box;display:flex;align-items:center;justify-content:center">130%</div>
<div class="c" style="left:620.30px;top:362.00px;width:69.10px;height:20.10px;color:#222;-webkit-text-stroke:0.05px #222;font-size:9.3px;padding-top:0.5px;box-sizing:border-box;display:flex;align-items:center;justify-content:center">85.6</div>
<div class="c" style="left:689.40px;top:362.00px;width:60.00px;height:20.10px;color:#222;-webkit-text-stroke:0.05px #222;font-size:9.3px;padding-top:0.5px;box-sizing:border-box;display:flex;align-items:center;justify-content:center">120.7</div>
<div class="c" style="left:749.40px;top:362.00px;width:26.10px;height:20.10px;display:flex;align-items:center;justify-content:center"><svg width="9" height="8.6" viewBox="0 0 9 8.6" style="margin-left:1px;margin-top:1px"><polygon points="0,0 9,0 4.5,8.6" fill="#e00000"/></svg></div>
<div class="c" style="left:775.50px;top:362.00px;width:34.00px;height:20.10px;color:#222;-webkit-text-stroke:0.05px #222;font-size:9.3px;padding-top:0.5px;box-sizing:border-box;display:flex;align-items:center;justify-content:center">71%</div>
<div class="c" style="left:809.50px;top:362.00px;width:61.90px;height:20.10px;color:#222;-webkit-text-stroke:0.05px #222;font-size:9.3px;padding-top:0.5px;box-sizing:border-box;display:flex;align-items:center;justify-content:center">134.0</div>
<div class="c" style="left:871.40px;top:362.00px;width:23.00px;height:20.10px;display:flex;align-items:center;justify-content:center"><svg width="9" height="8.6" viewBox="0 0 9 8.6" style="margin-left:1px;margin-top:1px"><polygon points="0,0 9,0 4.5,8.6" fill="#e00000"/></svg></div>
<div class="c" style="left:894.40px;top:362.00px;width:36.90px;height:20.10px;color:#222;-webkit-text-stroke:0.05px #222;font-size:9.3px;padding-top:0.5px;box-sizing:border-box;display:flex;align-items:center;justify-content:center">64%</div>
<div class="c" style="left:620.30px;top:382.10px;width:69.10px;height:20.10px;color:#222;-webkit-text-stroke:0.05px #222;font-size:9.3px;padding-top:0.5px;box-sizing:border-box;display:flex;align-items:center;justify-content:center">57.0</div>
<div class="c" style="left:689.40px;top:382.10px;width:60.00px;height:20.10px;color:#222;-webkit-text-stroke:0.05px #222;font-size:9.3px;padding-top:0.5px;box-sizing:border-box;display:flex;align-items:center;justify-content:center">118.9</div>
<div class="c" style="left:749.40px;top:382.10px;width:26.10px;height:20.10px;display:flex;align-items:center;justify-content:center"><svg width="9" height="8.6" viewBox="0 0 9 8.6" style="margin-left:1px;margin-top:1px"><polygon points="0,0 9,0 4.5,8.6" fill="#e00000"/></svg></div>
<div class="c" style="left:775.50px;top:382.10px;width:34.00px;height:20.10px;color:#222;-webkit-text-stroke:0.05px #222;font-size:9.3px;padding-top:0.5px;box-sizing:border-box;display:flex;align-items:center;justify-content:center">48%</div>
<div class="c" style="left:809.50px;top:382.10px;width:61.90px;height:20.10px;color:#222;-webkit-text-stroke:0.05px #222;font-size:9.3px;padding-top:0.5px;box-sizing:border-box;display:flex;align-items:center;justify-content:center">93.9</div>
<div class="c" style="left:871.40px;top:382.10px;width:23.00px;height:20.10px;display:flex;align-items:center;justify-content:center"><svg width="9" height="8.6" viewBox="0 0 9 8.6" style="margin-left:1px;margin-top:1px"><polygon points="0,0 9,0 4.5,8.6" fill="#e00000"/></svg></div>
<div class="c" style="left:894.40px;top:382.10px;width:36.90px;height:20.10px;color:#222;-webkit-text-stroke:0.05px #222;font-size:9.3px;padding-top:0.5px;box-sizing:border-box;display:flex;align-items:center;justify-content:center">61%</div>
<div class="" style="left:619.10px;top:171.80px;width:312.30px;height:416.10px;border:1.7px solid #66a04a;box-sizing:border-box"></div>
<div class="" style="left:935.40px;top:172.20px;width:314.00px;height:415.40px;background:#fff"></div>
<div class="" style="left:935.40px;top:172.20px;width:314.00px;height:28.80px;background:#a12c9b"></div>
<div class="" style="left:935.40px;top:200.70px;width:314.00px;height:1.00px;background:#efd9ee"></div>
<div class="" style="left:935.40px;top:220.80px;width:314.00px;height:1.00px;background:#efd9ee"></div>
<div class="" style="left:935.40px;top:240.90px;width:314.00px;height:1.00px;background:#efd9ee"></div>
<div class="" style="left:935.40px;top:261.00px;width:314.00px;height:1.00px;background:#efd9ee"></div>
<div class="" style="left:935.40px;top:281.10px;width:314.00px;height:1.00px;background:#efd9ee"></div>
<div class="" style="left:935.40px;top:301.20px;width:314.00px;height:1.00px;background:#efd9ee"></div>
<div class="" style="left:935.40px;top:321.30px;width:314.00px;height:1.00px;background:#efd9ee"></div>
<div class="" style="left:935.40px;top:341.40px;width:314.00px;height:1.00px;background:#efd9ee"></div>
<div class="" style="left:935.40px;top:361.50px;width:314.00px;height:1.00px;background:#efd9ee"></div>
<div class="" style="left:935.40px;top:381.60px;width:314.00px;height:1.00px;background:#efd9ee"></div>
<div class="" style="left:935.40px;top:401.70px;width:314.00px;height:1.00px;background:#efd9ee"></div>
<div class="" style="left:935.40px;top:420.24px;width:314.00px;height:1.00px;background:#efd9ee"></div>
<div class="" style="left:935.40px;top:438.78px;width:314.00px;height:1.00px;background:#efd9ee"></div>
<div class="" style="left:935.40px;top:457.32px;width:314.00px;height:1.00px;background:#efd9ee"></div>
<div class="" style="left:935.40px;top:475.86px;width:314.00px;height:1.00px;background:#efd9ee"></div>
<div class="" style="left:935.40px;top:494.40px;width:314.00px;height:1.00px;background:#efd9ee"></div>
<div class="" style="left:935.40px;top:512.94px;width:314.00px;height:1.00px;background:#efd9ee"></div>
<div class="" style="left:935.40px;top:531.48px;width:314.00px;height:1.00px;background:#efd9ee"></div>
<div class="" style="left:935.40px;top:550.02px;width:314.00px;height:1.00px;background:#efd9ee"></div>
<div class="" style="left:935.40px;top:568.56px;width:314.00px;height:1.00px;background:#efd9ee"></div>
<div class="" style="left:998.00px;top:201.00px;width:1.00px;height:386.60px;background:#efd9ee"></div>
<div class="" style="left:998.00px;top:172.20px;width:1.00px;height:28.80px;background:rgba(255,255,255,.55)"></div>
<div class="" style="left:1058.80px;top:201.00px;width:1.00px;height:386.60px;background:#efd9ee"></div>
<div class="" style="left:1058.80px;top:172.20px;width:1.00px;height:28.80px;background:rgba(255,255,255,.55)"></div>
<div class="" style="left:1127.70px;top:201.00px;width:1.00px;height:386.60px;background:#efd9ee"></div>
<div class="" style="left:1127.70px;top:172.20px;width:1.00px;height:28.80px;background:rgba(255,255,255,.55)"></div>
<div class="" style="left:1188.90px;top:201.00px;width:1.00px;height:386.60px;background:#efd9ee"></div>
<div class="" style="left:1188.90px;top:172.20px;width:1.00px;height:28.80px;background:rgba(255,255,255,.55)"></div>
<div class="c" style="left:935.40px;top:172.20px;width:63.10px;height:28.80px;color:#fff;font-weight:bold;font-size:10.2px;line-height:11.8px;padding-top:3px;box-sizing:border-box;display:flex;align-items:center;justify-content:center;text-align:center">Actual</div>
<div class="c" style="left:998.50px;top:172.20px;width:60.80px;height:28.80px;color:#fff;font-weight:bold;font-size:10.2px;line-height:11.8px;padding-top:3px;box-sizing:border-box;display:flex;align-items:center;justify-content:center;text-align:center">Target</div>
<div class="c" style="left:1059.30px;top:172.20px;width:68.90px;height:28.80px;color:#fff;font-weight:bold;font-size:10.2px;line-height:11.8px;padding-top:3px;box-sizing:border-box;display:flex;align-items:center;justify-content:center;text-align:center">Actual Vs<br>Target</div>
<div class="c" style="left:1128.20px;top:172.20px;width:61.20px;height:28.80px;color:#fff;font-weight:bold;font-size:10.2px;line-height:11.8px;padding-top:3px;box-sizing:border-box;display:flex;align-items:center;justify-content:center;text-align:center">PY</div>
<div class="c" style="left:1189.40px;top:172.20px;width:60.00px;height:28.80px;color:#fff;font-weight:bold;font-size:10.2px;line-height:11.8px;padding-top:3px;box-sizing:border-box;display:flex;align-items:center;justify-content:center;text-align:center">Actual Vs<br>PY</div>
<div class="c" style="left:935.40px;top:201.20px;width:63.10px;height:20.10px;color:#222;-webkit-text-stroke:0.05px #222;font-size:9.3px;padding-top:0.5px;box-sizing:border-box;display:flex;align-items:center;justify-content:center">82.2</div>
<div class="c" style="left:998.50px;top:201.20px;width:60.80px;height:20.10px;color:#222;-webkit-text-stroke:0.05px #222;font-size:9.3px;padding-top:0.5px;box-sizing:border-box;display:flex;align-items:center;justify-content:center">63.6</div>
<div class="c" style="left:1059.30px;top:201.20px;width:24.90px;height:20.10px;display:flex;align-items:center;justify-content:center"><svg width="9" height="8.6" viewBox="0 0 9 8.6" style="margin-left:1px;margin-top:1px"><polygon points="0,0 9,0 4.5,8.6" fill="#5ca445"/></svg></div>
<div class="c" style="left:1084.20px;top:201.20px;width:44.00px;height:20.10px;color:#222;-webkit-text-stroke:0.05px #222;font-size:9.3px;padding-top:0.5px;box-sizing:border-box;display:flex;align-items:center;justify-content:center">129%</div>
<div class="c" style="left:1128.20px;top:201.20px;width:61.20px;height:20.10px;color:#222;-webkit-text-stroke:0.05px #222;font-size:9.3px;padding-top:0.5px;box-sizing:border-box;display:flex;align-items:center;justify-content:center">68.1</div>
<div class="c" style="left:1189.40px;top:201.20px;width:26.00px;height:20.10px;display:flex;align-items:center;justify-content:center"><svg width="9" height="8.6" viewBox="0 0 9 8.6" style="margin-left:1px;margin-top:1px"><polygon points="0,8.6 9,8.6 4.5,0" fill="#e00000"/></svg></div>
<div class="c" style="left:1215.40px;top:201.20px;width:34.00px;height:20.10px;color:#222;-webkit-text-stroke:0.05px #222;font-size:9.3px;padding-top:0.5px;box-sizing:border-box;display:flex;align-items:center;justify-content:center">121%</div>
<div class="c" style="left:935.40px;top:221.30px;width:63.10px;height:20.10px;color:#222;-webkit-text-stroke:0.05px #222;font-size:9.3px;padding-top:0.5px;box-sizing:border-box;display:flex;align-items:center;justify-content:center">83.6</div>
<div class="c" style="left:998.50px;top:221.30px;width:60.80px;height:20.10px;color:#222;-webkit-text-stroke:0.05px #222;font-size:9.3px;padding-top:0.5px;box-sizing:border-box;display:flex;align-items:center;justify-content:center">81.5</div>
<div class="c" style="left:1059.30px;top:221.30px;width:24.90px;height:20.10px;display:flex;align-items:center;justify-content:center"><svg width="9" height="8.6" viewBox="0 0 9 8.6" style="margin-left:1px;margin-top:1px"><polygon points="0,0 9,0 4.5,8.6" fill="#5ca445"/></svg></div>
<div class="c" style="left:1084.20px;top:221.30px;width:44.00px;height:20.10px;color:#222;-webkit-text-stroke:0.05px #222;font-size:9.3px;padding-top:0.5px;box-sizing:border-box;display:flex;align-items:center;justify-content:center">103%</div>
<div class="c" style="left:1128.20px;top:221.30px;width:61.20px;height:20.10px;color:#222;-webkit-text-stroke:0.05px #222;font-size:9.3px;padding-top:0.5px;box-sizing:border-box;display:flex;align-items:center;justify-content:center">81.5</div>
<div class="c" style="left:1189.40px;top:221.30px;width:26.00px;height:20.10px;display:flex;align-items:center;justify-content:center"><svg width="9" height="8.6" viewBox="0 0 9 8.6" style="margin-left:1px;margin-top:1px"><polygon points="0,0 9,0 4.5,8.6" fill="#e00000"/></svg></div>
<div class="c" style="left:1215.40px;top:221.30px;width:34.00px;height:20.10px;color:#222;-webkit-text-stroke:0.05px #222;font-size:9.3px;padding-top:0.5px;box-sizing:border-box;display:flex;align-items:center;justify-content:center">103%</div>
<div class="c" style="left:935.40px;top:241.40px;width:63.10px;height:20.10px;color:#222;-webkit-text-stroke:0.05px #222;font-size:9.3px;padding-top:0.5px;box-sizing:border-box;display:flex;align-items:center;justify-content:center">74.9</div>
<div class="c" style="left:998.50px;top:241.40px;width:60.80px;height:20.10px;color:#222;-webkit-text-stroke:0.05px #222;font-size:9.3px;padding-top:0.5px;box-sizing:border-box;display:flex;align-items:center;justify-content:center">48.7</div>
<div class="c" style="left:1059.30px;top:241.40px;width:24.90px;height:20.10px;display:flex;align-items:center;justify-content:center"><svg width="9" height="8.6" viewBox="0 0 9 8.6" style="margin-left:1px;margin-top:1px"><polygon points="0,8.6 9,8.6 4.5,0" fill="#5ca445"/></svg></div>
<div class="c" style="left:1084.20px;top:241.40px;width:44.00px;height:20.10px;color:#222;-webkit-text-stroke:0.05px #222;font-size:9.3px;padding-top:0.5px;box-sizing:border-box;display:flex;align-items:center;justify-content:center">154%</div>
<div class="c" style="left:1128.20px;top:241.40px;width:61.20px;height:20.10px;color:#222;-webkit-text-stroke:0.05px #222;font-size:9.3px;padding-top:0.5px;box-sizing:border-box;display:flex;align-items:center;justify-content:center">45.8</div>
<div class="c" style="left:1189.40px;top:241.40px;width:26.00px;height:20.10px;display:flex;align-items:center;justify-content:center"><svg width="9" height="8.6" viewBox="0 0 9 8.6" style="margin-left:1px;margin-top:1px"><polygon points="0,8.6 9,8.6 4.5,0" fill="#e00000"/></svg></div>
<div class="c" style="left:1215.40px;top:241.40px;width:34.00px;height:20.10px;color:#222;-webkit-text-stroke:0.05px #222;font-size:9.3px;padding-top:0.5px;box-sizing:border-box;display:flex;align-items:center;justify-content:center">163%</div>
<div class="c" style="left:935.40px;top:261.50px;width:63.10px;height:20.10px;color:#222;-webkit-text-stroke:0.05px #222;font-size:9.3px;padding-top:0.5px;box-sizing:border-box;display:flex;align-items:center;justify-content:center">54.7</div>
<div class="c" style="left:998.50px;top:261.50px;width:60.80px;height:20.10px;color:#222;-webkit-text-stroke:0.05px #222;font-size:9.3px;padding-top:0.5px;box-sizing:border-box;display:flex;align-items:center;justify-content:center">78.5</div>
<div class="c" style="left:1059.30px;top:261.50px;width:24.90px;height:20.10px;display:flex;align-items:center;justify-content:center"><svg width="9" height="8.6" viewBox="0 0 9 8.6" style="margin-left:1px;margin-top:1px"><polygon points="0,8.6 9,8.6 4.5,0" fill="#5ca445"/></svg></div>
<div class="c" style="left:1084.20px;top:261.50px;width:44.00px;height:20.10px;color:#222;-webkit-text-stroke:0.05px #222;font-size:9.3px;padding-top:0.5px;box-sizing:border-box;display:flex;align-items:center;justify-content:center">70%</div>
<div class="c" style="left:1128.20px;top:261.50px;width:61.20px;height:20.10px;color:#222;-webkit-text-stroke:0.05px #222;font-size:9.3px;padding-top:0.5px;box-sizing:border-box;display:flex;align-items:center;justify-content:center">79.3</div>
<div class="c" style="left:1189.40px;top:261.50px;width:26.00px;height:20.10px;display:flex;align-items:center;justify-content:center"><svg width="9" height="8.6" viewBox="0 0 9 8.6" style="margin-left:1px;margin-top:1px"><polygon points="0,8.6 9,8.6 4.5,0" fill="#5ca445"/></svg></div>
<div class="c" style="left:1215.40px;top:261.50px;width:34.00px;height:20.10px;color:#222;-webkit-text-stroke:0.05px #222;font-size:9.3px;padding-top:0.5px;box-sizing:border-box;display:flex;align-items:center;justify-content:center">69%</div>
<div class="c" style="left:935.40px;top:281.60px;width:63.10px;height:20.10px;color:#222;-webkit-text-stroke:0.05px #222;font-size:9.3px;padding-top:0.5px;box-sizing:border-box;display:flex;align-items:center;justify-content:center">77.5</div>
<div class="c" style="left:998.50px;top:281.60px;width:60.80px;height:20.10px;color:#222;-webkit-text-stroke:0.05px #222;font-size:9.3px;padding-top:0.5px;box-sizing:border-box;display:flex;align-items:center;justify-content:center">81.1</div>
<div class="c" style="left:1059.30px;top:281.60px;width:24.90px;height:20.10px;display:flex;align-items:center;justify-content:center"><svg width="9" height="8.6" viewBox="0 0 9 8.6" style="margin-left:1px;margin-top:1px"><polygon points="0,8.6 9,8.6 4.5,0" fill="#e00000"/></svg></div>
<div class="c" style="left:1084.20px;top:281.60px;width:44.00px;height:20.10px;color:#222;-webkit-text-stroke:0.05px #222;font-size:9.3px;padding-top:0.5px;box-sizing:border-box;display:flex;align-items:center;justify-content:center">96%</div>
<div class="c" style="left:1128.20px;top:281.60px;width:61.20px;height:20.10px;color:#222;-webkit-text-stroke:0.05px #222;font-size:9.3px;padding-top:0.5px;box-sizing:border-box;display:flex;align-items:center;justify-content:center">78.7</div>
<div class="c" style="left:1189.40px;top:281.60px;width:26.00px;height:20.10px;display:flex;align-items:center;justify-content:center"><svg width="9" height="8.6" viewBox="0 0 9 8.6" style="margin-left:1px;margin-top:1px"><polygon points="0,8.6 9,8.6 4.5,0" fill="#e00000"/></svg></div>
<div class="c" style="left:1215.40px;top:281.60px;width:34.00px;height:20.10px;color:#222;-webkit-text-stroke:0.05px #222;font-size:9.3px;padding-top:0.5px;box-sizing:border-box;display:flex;align-items:center;justify-content:center">99%</div>
<div class="c" style="left:935.40px;top:301.70px;width:63.10px;height:20.10px;color:#222;-webkit-text-stroke:0.05px #222;font-size:9.3px;padding-top:0.5px;box-sizing:border-box;display:flex;align-items:center;justify-content:center">90.2</div>
<div class="c" style="left:998.50px;top:301.70px;width:60.80px;height:20.10px;color:#222;-webkit-text-stroke:0.05px #222;font-size:9.3px;padding-top:0.5px;box-sizing:border-box;display:flex;align-items:center;justify-content:center">101.1</div>
<div class="c" style="left:1059.30px;top:301.70px;width:24.90px;height:20.10px;display:flex;align-items:center;justify-content:center"><svg width="9" height="8.6" viewBox="0 0 9 8.6" style="margin-left:1px;margin-top:1px"><polygon points="0,0 9,0 4.5,8.6" fill="#5ca445"/></svg></div>
<div class="c" style="left:1084.20px;top:301.70px;width:44.00px;height:20.10px;color:#222;-webkit-text-stroke:0.05px #222;font-size:9.3px;padding-top:0.5px;box-sizing:border-box;display:flex;align-items:center;justify-content:center">89%</div>
<div class="c" style="left:1128.20px;top:301.70px;width:61.20px;height:20.10px;color:#222;-webkit-text-stroke:0.05px #222;font-size:9.3px;padding-top:0.5px;box-sizing:border-box;display:flex;align-items:center;justify-content:center">91.0</div>
<div class="c" style="left:1189.40px;top:301.70px;width:26.00px;height:20.10px;display:flex;align-items:center;justify-content:center"><svg width="9" height="8.6" viewBox="0 0 9 8.6" style="margin-left:1px;margin-top:1px"><polygon points="0,0 9,0 4.5,8.6" fill="#5ca445"/></svg></div>
<div class="c" style="left:1215.40px;top:301.70px;width:34.00px;height:20.10px;color:#222;-webkit-text-stroke:0.05px #222;font-size:9.3px;padding-top:0.5px;box-sizing:border-box;display:flex;align-items:center;justify-content:center">99%</div>
<div class="c" style="left:935.40px;top:321.80px;width:63.10px;height:20.10px;color:#222;-webkit-text-stroke:0.05px #222;font-size:9.3px;padding-top:0.5px;box-sizing:border-box;display:flex;align-items:center;justify-content:center">54.8</div>
<div class="c" style="left:998.50px;top:321.80px;width:60.80px;height:20.10px;color:#222;-webkit-text-stroke:0.05px #222;font-size:9.3px;padding-top:0.5px;box-sizing:border-box;display:flex;align-items:center;justify-content:center">65.2</div>
<div class="c" style="left:1059.30px;top:321.80px;width:24.90px;height:20.10px;display:flex;align-items:center;justify-content:center"><svg width="9" height="8.6" viewBox="0 0 9 8.6" style="margin-left:1px;margin-top:1px"><polygon points="0,8.6 9,8.6 4.5,0" fill="#5ca445"/></svg></div>
<div class="c" style="left:1084.20px;top:321.80px;width:44.00px;height:20.10px;color:#222;-webkit-text-stroke:0.05px #222;font-size:9.3px;padding-top:0.5px;box-sizing:border-box;display:flex;align-items:center;justify-content:center">84%</div>
<div class="c" style="left:1128.20px;top:321.80px;width:61.20px;height:20.10px;color:#222;-webkit-text-stroke:0.05px #222;font-size:9.3px;padding-top:0.5px;box-sizing:border-box;display:flex;align-items:center;justify-content:center">53.5</div>
<div class="c" style="left:1189.40px;top:321.80px;width:26.00px;height:20.10px;display:flex;align-items:center;justify-content:center"><svg width="9" height="8.6" viewBox="0 0 9 8.6" style="margin-left:1px;margin-top:1px"><polygon points="0,8.6 9,8.6 4.5,0" fill="#5ca445"/></svg></div>
<div class="c" style="left:1215.40px;top:321.80px;width:34.00px;height:20.10px;color:#222;-webkit-text-stroke:0.05px #222;font-size:9.3px;padding-top:0.5px;box-sizing:border-box;display:flex;align-items:center;justify-content:center">102%</div>
<div class="c" style="left:935.40px;top:341.90px;width:63.10px;height:20.10px;color:#222;-webkit-text-stroke:0.05px #222;font-size:9.3px;padding-top:0.5px;box-sizing:border-box;display:flex;align-items:center;justify-content:center">79.3</div>
<div class="c" style="left:998.50px;top:341.90px;width:60.80px;height:20.10px;color:#222;-webkit-text-stroke:0.05px #222;font-size:9.3px;padding-top:0.5px;box-sizing:border-box;display:flex;align-items:center;justify-content:center">83.0</div>
<div class="c" style="left:1059.30px;top:341.90px;width:24.90px;height:20.10px;display:flex;align-items:center;justify-content:center"><svg width="9" height="8.6" viewBox="0 0 9 8.6" style="margin-left:1px;margin-top:1px"><polygon points="0,8.6 9,8.6 4.5,0" fill="#e00000"/></svg></div>
<div class="c" style="left:1084.20px;top:341.90px;width:44.00px;height:20.10px;color:#222;-webkit-text-stroke:0.05px #222;font-size:9.3px;padding-top:0.5px;box-sizing:border-box;display:flex;align-items:center;justify-content:center">96%</div>
<div class="c" style="left:1128.20px;top:341.90px;width:61.20px;height:20.10px;color:#222;-webkit-text-stroke:0.05px #222;font-size:9.3px;padding-top:0.5px;box-sizing:border-box;display:flex;align-items:center;justify-content:center">74.7</div>
<div class="c" style="left:1189.40px;top:341.90px;width:26.00px;height:20.10px;display:flex;align-items:center;justify-content:center"><svg width="9" height="8.6" viewBox="0 0 9 8.6" style="margin-left:1px;margin-top:1px"><polygon points="0,8.6 9,8.6 4.5,0" fill="#e00000"/></svg></div>
<div class="c" style="left:1215.40px;top:341.90px;width:34.00px;height:20.10px;color:#222;-webkit-text-stroke:0.05px #222;font-size:9.3px;padding-top:0.5px;box-sizing:border-box;display:flex;align-items:center;justify-content:center">106%</div>
<div class="c" style="left:935.40px;top:362.00px;width:63.10px;height:20.10px;color:#222;-webkit-text-stroke:0.05px #222;font-size:9.3px;padding-top:0.5px;box-sizing:border-box;display:flex;align-items:center;justify-content:center">97.7</div>
<div class="c" style="left:998.50px;top:362.00px;width:60.80px;height:20.10px;color:#222;-webkit-text-stroke:0.05px #222;font-size:9.3px;padding-top:0.5px;box-sizing:border-box;display:flex;align-items:center;justify-content:center">89.2</div>
<div class="c" style="left:1059.30px;top:362.00px;width:24.90px;height:20.10px;display:flex;align-items:center;justify-content:center"><svg width="9" height="8.6" viewBox="0 0 9 8.6" style="margin-left:1px;margin-top:1px"><polygon points="0,0 9,0 4.5,8.6" fill="#5ca445"/></svg></div>
<div class="c" style="left:1084.20px;top:362.00px;width:44.00px;height:20.10px;color:#222;-webkit-text-stroke:0.05px #222;font-size:9.3px;padding-top:0.5px;box-sizing:border-box;display:flex;align-items:center;justify-content:center">110%</div>
<div class="c" style="left:1128.20px;top:362.00px;width:61.20px;height:20.10px;color:#222;-webkit-text-stroke:0.05px #222;font-size:9.3px;padding-top:0.5px;box-sizing:border-box;display:flex;align-items:center;justify-content:center">98.1</div>
<div class="c" style="left:1189.40px;top:362.00px;width:26.00px;height:20.10px;display:flex;align-items:center;justify-content:center"><svg width="9" height="8.6" viewBox="0 0 9 8.6" style="margin-left:1px;margin-top:1px"><polygon points="0,0 9,0 4.5,8.6" fill="#e00000"/></svg></div>
<div class="c" style="left:1215.40px;top:362.00px;width:34.00px;height:20.10px;color:#222;-webkit-text-stroke:0.05px #222;font-size:9.3px;padding-top:0.5px;box-sizing:border-box;display:flex;align-items:center;justify-content:center">100%</div>
<div class="c" style="left:935.40px;top:382.10px;width:63.10px;height:20.10px;color:#222;-webkit-text-stroke:0.05px #222;font-size:9.3px;padding-top:0.5px;box-sizing:border-box;display:flex;align-items:center;justify-content:center">99.1</div>
<div class="c" style="left:998.50px;top:382.10px;width:60.80px;height:20.10px;color:#222;-webkit-text-stroke:0.05px #222;font-size:9.3px;padding-top:0.5px;box-sizing:border-box;display:flex;align-items:center;justify-content:center">77.8</div>
<div class="c" style="left:1059.30px;top:382.10px;width:24.90px;height:20.10px;display:flex;align-items:center;justify-content:center"><svg width="9" height="8.6" viewBox="0 0 9 8.6" style="margin-left:1px;margin-top:1px"><polygon points="0,0 9,0 4.5,8.6" fill="#5ca445"/></svg></div>
<div class="c" style="left:1084.20px;top:382.10px;width:44.00px;height:20.10px;color:#222;-webkit-text-stroke:0.05px #222;font-size:9.3px;padding-top:0.5px;box-sizing:border-box;display:flex;align-items:center;justify-content:center">127%</div>
<div class="c" style="left:1128.20px;top:382.10px;width:61.20px;height:20.10px;color:#222;-webkit-text-stroke:0.05px #222;font-size:9.3px;padding-top:0.5px;box-sizing:border-box;display:flex;align-items:center;justify-content:center">67.7</div>
<div class="c" style="left:1189.40px;top:382.10px;width:26.00px;height:20.10px;display:flex;align-items:center;justify-content:center"><svg width="9" height="8.6" viewBox="0 0 9 8.6" style="margin-left:1px;margin-top:1px"><polygon points="0,0 9,0 4.5,8.6" fill="#e00000"/></svg></div>
<div class="c" style="left:1215.40px;top:382.10px;width:34.00px;height:20.10px;color:#222;-webkit-text-stroke:0.05px #222;font-size:9.3px;padding-top:0.5px;box-sizing:border-box;display:flex;align-items:center;justify-content:center">146%</div>
<div class="" style="left:934.50px;top:171.80px;width:315.50px;height:416.10px;border:1.7px solid #5c1a56;box-sizing:border-box"></div>
</div>
<div class="ch" style="left:40.00px;width:8.40px">A</div><div style="position:absolute;left:40px;top:71.5px;width:1px;height:20.5px;background:#d6d6d6"></div>
<div class="ch" style="left:48.40px;width:48.90px">B</div><div style="position:absolute;left:48px;top:71.5px;width:1px;height:20.5px;background:#d6d6d6"></div>
<div class="ch" style="left:97.30px;width:126.20px">C</div><div style="position:absolute;left:97px;top:71.5px;width:1px;height:20.5px;background:#d6d6d6"></div>
<div class="ch" style="left:223.50px;width:206.20px">D</div><div style="position:absolute;left:223px;top:71.5px;width:1px;height:20.5px;background:#d6d6d6"></div>
<div class="ch" style="left:429.70px;width:130.80px">E</div><div style="position:absolute;left:429px;top:71.5px;width:1px;height:20.5px;background:#d6d6d6"></div>
<div class="ch" style="left:560.50px;width:54.10px">F</div><div style="position:absolute;left:560px;top:71.5px;width:1px;height:20.5px;background:#d6d6d6"></div>
<div class="ch" style="left:614.60px;width:5.70px"></div><div style="position:absolute;left:614px;top:71.5px;width:1px;height:20.5px;background:#d6d6d6"></div>
<div class="ch" style="left:620.30px;width:69.10px">H</div><div style="position:absolute;left:620px;top:71.5px;width:1px;height:20.5px;background:#d6d6d6"></div>
<div class="ch" style="left:689.40px;width:60.00px">I</div><div style="position:absolute;left:689px;top:71.5px;width:1px;height:20.5px;background:#d6d6d6"></div>
<div class="ch" style="left:749.40px;width:26.10px">J</div><div style="position:absolute;left:749px;top:71.5px;width:1px;height:20.5px;background:#d6d6d6"></div>
<div class="ch" style="left:775.50px;width:34.00px">K</div><div style="position:absolute;left:775px;top:71.5px;width:1px;height:20.5px;background:#d6d6d6"></div>
<div class="ch" style="left:809.50px;width:61.90px">L</div><div style="position:absolute;left:809px;top:71.5px;width:1px;height:20.5px;background:#d6d6d6"></div>
<div class="ch" style="left:871.40px;width:23.00px">M</div><div style="position:absolute;left:871px;top:71.5px;width:1px;height:20.5px;background:#d6d6d6"></div>
<div class="ch" style="left:894.40px;width:36.90px">N</div><div style="position:absolute;left:894px;top:71.5px;width:1px;height:20.5px;background:#d6d6d6"></div>
<div class="ch" style="left:931.30px;width:4.10px"></div><div style="position:absolute;left:931px;top:71.5px;width:1px;height:20.5px;background:#d6d6d6"></div>
<div class="ch" style="left:935.40px;width:63.10px">P</div><div style="position:absolute;left:935px;top:71.5px;width:1px;height:20.5px;background:#d6d6d6"></div>
<div class="ch" style="left:998.50px;width:60.80px">Q</div><div style="position:absolute;left:998px;top:71.5px;width:1px;height:20.5px;background:#d6d6d6"></div>
<div class="ch" style="left:1059.30px;width:24.90px">R</div><div style="position:absolute;left:1059px;top:71.5px;width:1px;height:20.5px;background:#d6d6d6"></div>
<div class="ch" style="left:1084.20px;width:44.00px">S</div><div style="position:absolute;left:1084px;top:71.5px;width:1px;height:20.5px;background:#d6d6d6"></div>
<div class="ch" style="left:1128.20px;width:61.20px">T</div><div style="position:absolute;left:1128px;top:71.5px;width:1px;height:20.5px;background:#d6d6d6"></div>
<div class="ch" style="left:1189.40px;width:26.00px">U</div><div style="position:absolute;left:1189px;top:71.5px;width:1px;height:20.5px;background:#d6d6d6"></div>
<div class="ch" style="left:1215.40px;width:34.00px">V</div><div style="position:absolute;left:1215px;top:71.5px;width:1px;height:20.5px;background:#d6d6d6"></div>
<div class="ch" style="left:1249.40px;width:4.90px"></div><div style="position:absolute;left:1249px;top:71.5px;width:1px;height:20.5px;background:#d6d6d6"></div>
<div class="ch" style="left:1254.30px;width:26.70px">X</div><div style="position:absolute;left:1254px;top:71.5px;width:1px;height:20.5px;background:#d6d6d6"></div>
<div style="position:absolute;left:0;top:71px;width:1280px;height:1px;background:#c4c7c5"></div>
<div class="corner"></div>
<div style="position:absolute;left:36.2px;top:71.5px;width:3.6px;height:20.7px;background:#c7c7c7"></div>
<div style="position:absolute;left:0;top:88.8px;width:39.8px;height:3.4px;background:#c7c7c7"></div>
<div class="rh" style="top:92.00px;height:38.70px;line-height:36.70px">1</div>
<div class="rh" style="top:130.70px;height:7.30px;line-height:14.00px">2</div>
<div class="rh sel" style="top:138.00px;height:28.30px;line-height:26.10px">3</div>
<div class="rh" style="top:166.30px;height:5.90px;line-height:16.50px">4</div>
<div class="rh" style="top:172.20px;height:28.80px;line-height:26.80px">5</div>
<div class="rh" style="top:201.20px;height:20.10px;line-height:18.10px">6</div>
<div class="rh" style="top:221.30px;height:20.10px;line-height:18.10px">7</div>
<div class="rh" style="top:241.40px;height:20.10px;line-height:18.10px">8</div>
<div class="rh" style="top:261.50px;height:20.10px;line-height:18.10px">9</div>
<div class="rh" style="top:281.60px;height:20.10px;line-height:18.10px">10</div>
<div class="rh" style="top:301.70px;height:20.10px;line-height:18.10px">11</div>
<div class="rh" style="top:321.80px;height:20.10px;line-height:18.10px">12</div>
<div class="rh" style="top:341.90px;height:20.10px;line-height:18.10px">13</div>
<div class="rh" style="top:362.00px;height:20.10px;line-height:18.10px">14</div>
<div class="rh" style="top:382.10px;height:20.10px;line-height:18.10px">15</div>
<div class="rh" style="top:402.20px;height:18.54px;line-height:16.54px">16</div>
<div class="rh" style="top:420.74px;height:18.54px;line-height:16.54px">17</div>
<div class="rh" style="top:439.28px;height:18.54px;line-height:16.54px">18</div>
<div class="rh" style="top:457.82px;height:18.54px;line-height:16.54px">19</div>
<div class="rh" style="top:476.36px;height:18.54px;line-height:16.54px">20</div>
<div class="rh" style="top:494.90px;height:18.54px;line-height:16.54px">21</div>
<div class="rh" style="top:513.44px;height:18.54px;line-height:16.54px">22</div>
<div class="rh" style="top:531.98px;height:18.54px;line-height:16.54px">23</div>
<div class="rh" style="top:550.52px;height:18.54px;line-height:16.54px">24</div>
<div class="rh" style="top:569.06px;height:18.54px;line-height:16.54px">25</div>
<div class="rh" style="top:587.60px;height:18.54px;line-height:16.54px">26</div>
<div class="rh" style="top:606.14px;height:18.54px;line-height:16.54px">27</div>
</body></html>
